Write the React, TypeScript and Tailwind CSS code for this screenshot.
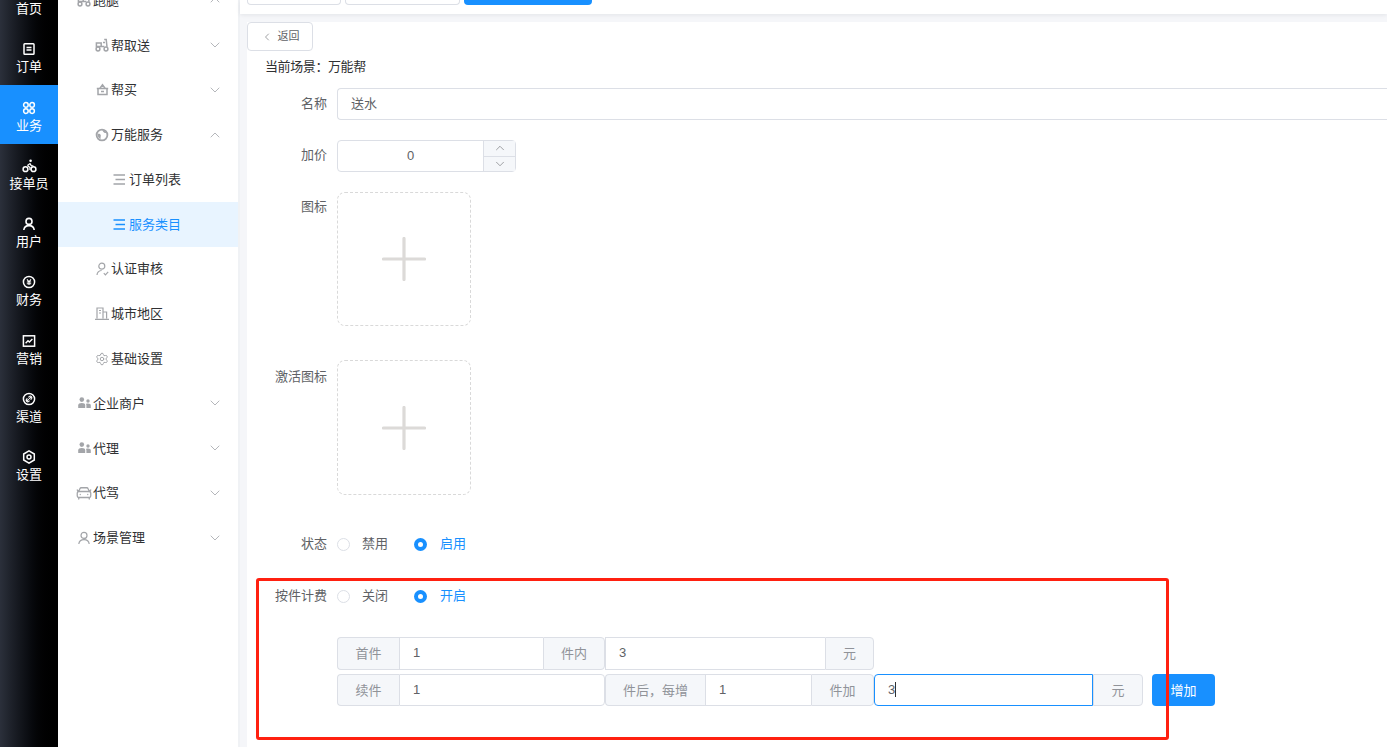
import React from "react";
import { CarFront, ChevronDown, ChevronLeft, ChevronUp, Settings } from "lucide-react";

const FONT = "font-['Liberation_Sans','Noto_Sans_CJK_SC',sans-serif]";

// rail icons
const OrderIcon = () => (
  <svg width="14" height="14" viewBox="0 0 14 14" fill="none" stroke="currentColor" strokeWidth="1.5">
    <rect x="2" y="1.7" width="10" height="10.6" rx="0.8" />
    <path d="M4.5 5.6h5M4.5 8h5" />
  </svg>
);
const BizIcon = () => (
  <svg width="14" height="14" viewBox="0 0 14 14" fill="none" stroke="currentColor" strokeWidth="1.5">
    <circle cx="3.9" cy="3.9" r="2.3" />
    <circle cx="10.1" cy="3.9" r="2.3" />
    <circle cx="3.9" cy="10.1" r="2.3" />
    <circle cx="10.1" cy="10.1" r="2.3" />
  </svg>
);
const RiderIcon = () => (
  <svg width="15" height="14" viewBox="0 0 15 14" fill="none" stroke="currentColor" strokeWidth="1.5">
    <circle cx="3.5" cy="10.2" r="2.4" />
    <circle cx="11.5" cy="10.2" r="2.4" />
    <circle cx="8.6" cy="1.8" r="1.3" fill="currentColor" stroke="none" />
    <path d="M5.4 6.6 8 4.6l1.4 2.2h2M5.4 6.6l2.6 2v2.4" strokeWidth="1.3" />
  </svg>
);
const UserIcon = ({ sw = 1.6 }: { sw?: number }) => (
  <svg width="14" height="14" viewBox="0 0 14 14" fill="none" stroke="currentColor" strokeWidth={sw}>
    <circle cx="7" cy="4.4" r="3" />
    <path d="M1.8 13c.3-2.8 2.4-4.4 5.2-4.4s4.9 1.6 5.2 4.4" />
  </svg>
);
const MoneyIcon = () => (
  <svg width="14" height="14" viewBox="0 0 14 14" fill="none" stroke="currentColor" strokeWidth="1.5">
    <circle cx="7" cy="7" r="5.6" />
    <path d="M5 4.4 7 6.8l2-2.4M4.8 7h4.4M4.8 8.8h4.4M7 6.8v3.2" strokeWidth="1.1" />
  </svg>
);
const ChartIcon = () => (
  <svg width="14" height="14" viewBox="0 0 14 14" fill="none" stroke="currentColor" strokeWidth="1.5">
    <rect x="1.4" y="1.8" width="11.2" height="10.4" />
    <path d="M3.6 9.2 6 6.8l1.4 1.2 3-3" strokeWidth="1.4" />
  </svg>
);
const ChannelIcon = () => (
  <svg width="14" height="14" viewBox="0 0 14 14" fill="none" stroke="currentColor" strokeWidth="1.5">
    <circle cx="7" cy="7" r="5.6" />
    <path d="M4.6 9.4 6.8 7.2M7.2 6.8l2.2-2.2M5.4 6.4l-1 1a1.6 1.6 0 0 0 2.2 2.2l1-1M8.6 7.6l1-1a1.6 1.6 0 0 0-2.2-2.2l-1 1" strokeWidth="1.1" />
  </svg>
);
const HexIcon = () => (
  <svg width="14" height="14" viewBox="0 0 14 14" fill="none" stroke="currentColor" strokeWidth="1.5">
    <path d="M7 .9 12.3 4v6L7 13.1 1.7 10V4z" />
    <circle cx="7" cy="7" r="2" />
  </svg>
);

// sub menu icons
const ScooterIcon = () => (
  <svg width="14" height="14" viewBox="0 0 14 14" fill="none" stroke="currentColor" strokeWidth="1.5">
    <circle cx="3" cy="11" r="1.9" />
    <circle cx="11" cy="11" r="1.9" />
    <path d="M9.2 1.4h2l.8 7.4M1.4 5h4.8v3.4H1.4zM6.2 8.4h3.2M10 4.4H8" />
  </svg>
);
const BasketIcon = () => (
  <svg width="13" height="13" viewBox="0 0 13 13" fill="none" stroke="currentColor" strokeWidth="1.5">
    <path d="M.8 5.600h11.400M2 5.600v6h9v-6M3.600 5.600 6.500 1.800l2.900 3.800M5 8.400h3" />
  </svg>
);
const GlobeIcon = () => (
  <svg width="14" height="14" viewBox="0 0 14 14" fill="none">
    <circle cx="7" cy="7" r="5.400" stroke="currentColor" strokeWidth="1.800" />
    <path d="M2.500 6c1.500-.4 2.800 0 3.200 1.100.3 1-.3 2-.1 3.800-2-.6-3.200-2.900-3.100-4.900zM7.400 2c1.900.2 3.300 1.300 3.900 2.800-1.300.4-2.300.1-2.800-.7C8.100 3.500 7.700 3.200 7.400 2z" fill="currentColor" />
  </svg>
);
const LinesIcon = () => (
  <svg width="13" height="11" viewBox="0 0 13 11" fill="none" stroke="currentColor" strokeWidth="1.4" className="-ml-[2px]">
    <path d="M.5 1h11.500M2.500 5.500H12M.5 10h11.500" />
  </svg>
);
const AuditIcon = () => (
  <svg width="13" height="14" viewBox="0 0 13 14" fill="none" stroke="currentColor" strokeWidth="1.2">
    <circle cx="5.800" cy="4.200" r="3" />
    <path d="M1 13c.2-2.700 1.900-4.300 4.600-4.500M7.800 11.200l1.600 1.600 2.800-3" />
  </svg>
);
const CityIcon = () => (
  <svg width="14" height="13" viewBox="0 0 14 13" fill="none" stroke="currentColor" strokeWidth="1.2">
    <path d="M2 11.500V1h6v10.500M8 5h3.600v6.500M0 12.300h14M4 3.500h2M4 6h2" />
  </svg>
);
const GroupIcon = () => (
  <svg width="13" height="12" viewBox="0 0 13 12" fill="currentColor">
    <circle cx="3.800" cy="2.600" r="2.300" />
    <path d="M.2 11V8.400C.2 6.800 1.600 6 3.800 6s3.400.8 3.400 2.400V11z" />
    <circle cx="10" cy="4" r="1.700" />
    <path d="M8.400 11V8.400c0-.7-.2-1.200-.5-1.500.6-.3 1.300-.4 2.100-.4 1.800 0 2.800.7 2.800 1.900V11z" />
  </svg>
);

type MenuRow = {
  label: string;
  icon?: React.ReactNode;
  indent: number;
  arrow?: "up" | "down";
  active?: boolean;
};

const menuRows: MenuRow[] = [
  { label: "跑腿", icon: <ScooterIcon />, indent: 18, arrow: "up" },
  { label: "帮取送", icon: <ScooterIcon />, indent: 36, arrow: "down" },
  { label: "帮买", icon: <BasketIcon />, indent: 36, arrow: "down" },
  { label: "万能服务", icon: <GlobeIcon />, indent: 36, arrow: "up" },
  { label: "订单列表", icon: <LinesIcon />, indent: 54 },
  { label: "服务类目", icon: <LinesIcon />, indent: 54, active: true },
  { label: "认证审核", icon: <AuditIcon />, indent: 36 },
  { label: "城市地区", icon: <CityIcon />, indent: 36 },
  { label: "基础设置", icon: <Settings size={14} strokeWidth={1.7} />, indent: 36 },
  { label: "企业商户", icon: <GroupIcon />, indent: 18, arrow: "down" },
  { label: "代理", icon: <GroupIcon />, indent: 18, arrow: "down" },
  { label: "代驾", icon: <CarFront size={18} strokeWidth={1.7} className="shrink-0 -ml-[1px]" />, indent: 18, arrow: "down" },
  { label: "场景管理", icon: <UserIcon sw={1.2} />, indent: 18, arrow: "down" },
];

const railItems = [
  { label: "首页", icon: <OrderIcon /> },
  { label: "订单", icon: <OrderIcon /> },
  { label: "业务", icon: <BizIcon />, active: true },
  { label: "接单员", icon: <RiderIcon /> },
  { label: "用户", icon: <UserIcon /> },
  { label: "财务", icon: <MoneyIcon /> },
  { label: "营销", icon: <ChartIcon /> },
  { label: "渠道", icon: <ChannelIcon /> },
  { label: "设置", icon: <HexIcon /> },
];

const Addon = ({ w, text, last, first }: { w: string; text: string; last?: boolean; first?: boolean }) => (
  <div
    className={`${w} flex items-center justify-center border-y border-[#dcdfe6] bg-[#f5f7fa] text-[#909399] ${
      first ? "rounded-l border-l" : ""
    } ${last ? "rounded-r border-x" : ""}`}
  >
    {text}
  </div>
);

const Val = ({ w, text, right }: { w: string; text: string; right?: boolean }) => (
  <div
    className={`${w} flex items-center pl-[13px] pb-[2px] border-y border-l border-[#dcdfe6] text-[#606266] ${
      right ? "rounded-r border-r" : ""
    }`}
  >
    {text}
  </div>
);

const Radio = ({ label, on }: { label: string; on?: boolean }) => (
  <div className={`flex items-center ${on ? "text-[#1890ff]" : "text-[#606266]"}`}>
    {on ? (
      <span className="w-[13px] h-[13px] rounded-full bg-[#1890ff] flex items-center justify-center">
        <span className="w-[5px] h-[5px] rounded-full bg-white" />
      </span>
    ) : (
      <span className="w-[13px] h-[13px] rounded-full border border-[#dcdfe6]" />
    )}
    <span className={`pb-[1px] ${on ? "ml-[13px]" : "ml-[12px]"}`}>{label}</span>
  </div>
);

const Upload = ({ tall }: { tall?: boolean }) => (
  <div
    className={`w-[134px] ${tall ? "h-[135px]" : "h-[134px]"} border border-dashed border-[#d9d9d9] rounded-lg flex items-center justify-center`}
  >
    <svg width="44" height="44" viewBox="0 0 44 44" stroke="#dcdad8" strokeWidth="3.2" strokeLinecap="round">
      <path d="M22 1.500v41M1.500 22h41" />
    </svg>
  </div>
);

export default function App() {
  return (
    <div className={`${FONT} relative flex w-[1387px] h-[747px] overflow-hidden bg-[#f5f6f9] text-[13px] leading-none`}>
      {/* left rail */}
      <aside className="w-[58px] shrink-0 h-full bg-gradient-to-r from-[#2b303b] to-black text-white">
        <div className="-mt-[31.6px]">
          {railItems.map((r) => (
            <div
              key={r.label}
              className={`h-[58.25px] pt-[4px] flex flex-col items-center justify-center gap-[4px] ${
                r.active ? "bg-[#1890ff] shadow-[0_1px_0_#1890ff]" : ""
              }`}
            >
              {r.icon}
              <span>{r.label}</span>
            </div>
          ))}
        </div>
      </aside>

      {/* sub menu */}
      <nav className="w-[180px] shrink-0 h-full bg-white text-[#303133]">
        <div className="-mt-[22.2px]">
          {menuRows.map((m) => (
            <div
              key={m.label}
              style={{ paddingLeft: m.indent + 1 }}
              className={`h-[44.8px] flex items-center pr-[15px] ${m.active ? "bg-[#e8f4ff] text-[#1890ff]" : ""}`}
            >
              <span className={`w-[14px] flex justify-center mr-[2px] ${m.active ? "text-[#1890ff]" : "text-[#a3a5a9]"}`}>{m.icon}</span>
              <span>{m.label}</span>
              {m.arrow === "up" && <ChevronUp size={16} strokeWidth={1} className="ml-auto text-[#909399]" />}
              {m.arrow === "down" && <ChevronDown size={16} strokeWidth={1} className="ml-auto text-[#909399]" />}
            </div>
          ))}
        </div>
      </nav>

      <main className="flex-1 min-w-0 h-full flex flex-col border-l-2 border-[#f0f2f5]">
        {/* top bar */}
        <div className="h-[14px] shrink-0 bg-white shadow-[0_1px_4px_rgba(0,21,41,0.08)] flex gap-1 pl-[7px] overflow-hidden">
          <div className="w-[94px] h-[5px] border border-t-0 border-[#dcdfe6] rounded-b" />
          <div className="w-[115px] h-[5px] border border-t-0 border-[#dcdfe6] rounded-b" />
          <div className="w-[128px] h-[5px] bg-[#1890ff] rounded-b" />
        </div>

        <div className="flex-1 min-h-0 pl-[7px] pt-[8px]">
          <div className="h-full bg-white">
            <button className="w-[66px] h-[29px] border border-[#dcdfe6] rounded bg-white flex items-center justify-center gap-[5px] text-[11px] text-[#606266]">
              <ChevronLeft size={12} strokeWidth={1.2} />
              返回
            </button>
            <div className="pl-[18px] mt-[8px] text-[#303133] h-[14px] flex items-center tracking-[-0.4px]">当前场景：万能帮</div>

            <div className="mt-[15px] flex items-center h-[32px]">
              <label className="w-[80px] text-right text-[#606266] pb-[2px]">名称</label>
              <div className="ml-[10px] flex-1 h-full border border-r-0 border-[#dcdfe6] rounded-l flex items-center pl-[13px] pb-[2px] text-[#606266]">送水</div>
            </div>

            <div className="mt-[20px] flex items-center h-[32px]">
              <label className="w-[80px] text-right text-[#606266] pb-[3px]">加价</label>
              <div className="ml-[10px] w-[179px] h-full border border-[#dcdfe6] rounded flex">
                <div className="flex-1 flex items-center justify-center pb-[2px] text-[#606266]">0</div>
                <div className="w-[32px] bg-[#f5f7fa] border-l border-[#dcdfe6] flex flex-col text-[#606266]">
                  <div className="flex-1 flex items-center justify-center border-b border-[#dcdfe6]"><ChevronUp size={14} strokeWidth={1} /></div>
                  <div className="flex-1 flex items-center justify-center"><ChevronDown size={14} strokeWidth={1} /></div>
                </div>
              </div>
            </div>

            <div className="mt-[20px] flex">
              <label className="w-[80px] text-right text-[#606266] pt-[8px]">图标</label>
              <div className="ml-[10px]"><Upload /></div>
            </div>

            <div className="mt-[34px] flex">
              <label className="w-[80px] text-right text-[#606266] pt-[10px]">激活图标</label>
              <div className="ml-[10px]"><Upload tall /></div>
            </div>

            <div className="mt-[42px] flex items-center h-[14px]">
              <label className="w-[80px] text-right text-[#606266] pb-[1px]">状态</label>
              <div className="ml-[10px] flex gap-[26px]">
                <Radio label="禁用" />
                <Radio label="启用" on />
              </div>
            </div>

            <div className="mt-[38px] flex items-center h-[14px]">
              <label className="w-[80px] text-right text-[#606266] pb-[1px]">按件计费</label>
              <div className="ml-[10px] flex gap-[26px]">
                <Radio label="关闭" />
                <Radio label="开启" on />
              </div>
            </div>

            <div className="mt-[34px] ml-[90px] flex h-[33px]">
              <Addon w="w-[62px]" text="首件" first />
              <Val w="w-[144px]" text="1" />
              <Addon w="w-[62px]" text="件内" last />
              <Val w="w-[220px]" text="3" />
              <Addon w="w-[49px]" text="元" last />
            </div>
            <div className="mt-[4px] ml-[90px] flex h-[32px]">
              <Addon w="w-[62px]" text="续件" first />
              <Val w="w-[206px]" text="1" right />
              <Addon w="w-[100px]" text="件后，每增" first />
              <Val w="w-[106px]" text="1" />
              <Addon w="w-[63px]" text="件加" last />
              <div className="w-[219px] flex items-center pl-[13px] pb-[1px] border border-[#1890ff] rounded-l text-[#606266]">
                3<span className="w-px h-[15px] bg-[#303133]" />
              </div>
              <Addon w="w-[50px]" text="元" last />
              <button className="ml-[9px] w-[63px] bg-[#1890ff] rounded-sm text-white">增加</button>
            </div>
          </div>
        </div>
      </main>

      {/* red annotation box drawn over the screenshot */}
      <div className="absolute left-[256px] top-[578px] w-[913px] h-[162px] border-[3px] border-[#ff2010] rounded-[3px] pointer-events-none" />
    </div>
  );
}
